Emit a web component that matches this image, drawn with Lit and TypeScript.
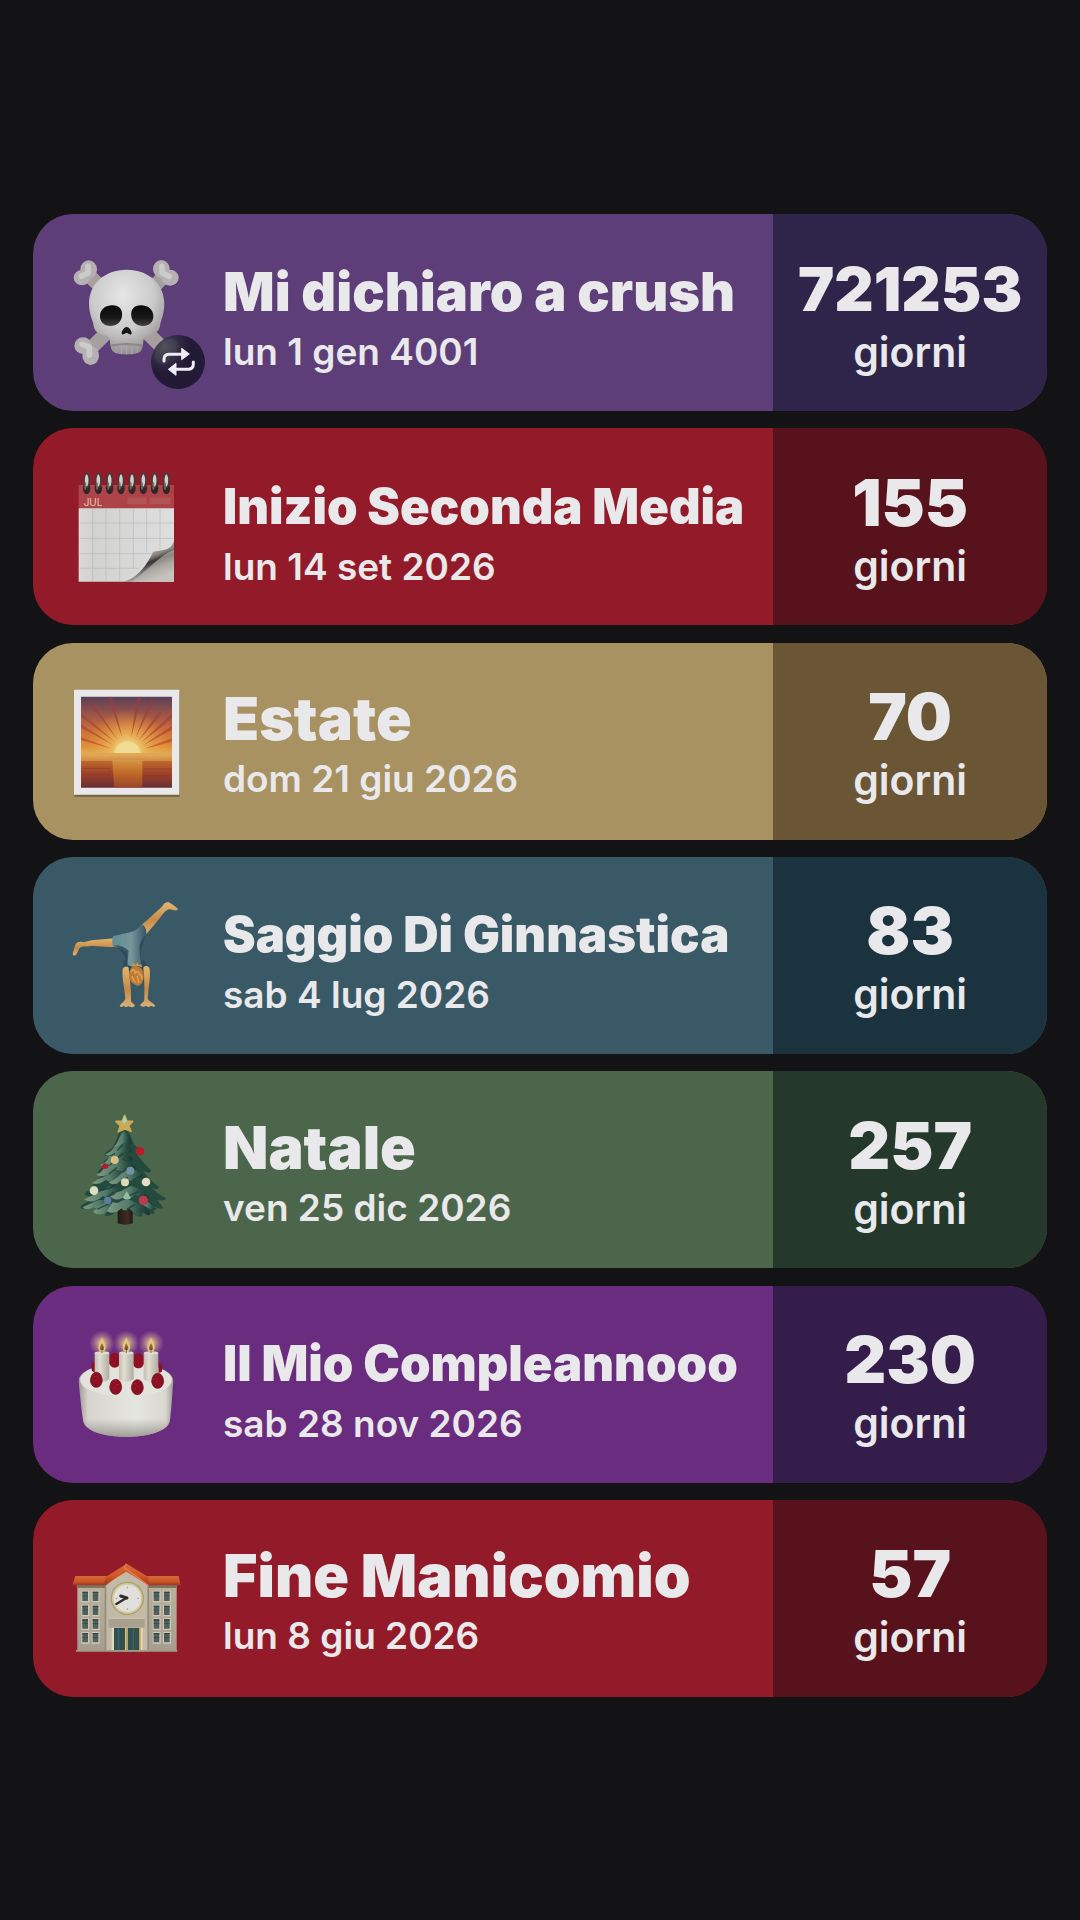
import { LitElement, css, html, svg } from 'lit';
import type { SVGTemplateResult } from 'lit';
import { customElement, property } from 'lit/decorators.js';
import { classMap } from 'lit/directives/class-map.js';

type Theme = 'violet' | 'red' | 'sand' | 'teal' | 'green' | 'purple';
type IconName = 'skull' | 'calendar' | 'sunrise' | 'cartwheel' | 'tree' | 'cake' | 'school';

interface Countdown {
  title: string;
  date: string;
  days: number;
  icon: IconName;
  theme: Theme;
  size?: 'medium' | 'small';
  repeats?: boolean;
}

const countdowns: Countdown[] = [
  { title: 'Mi dichiaro a crush', date: 'lun 1 gen 4001', days: 721253, icon: 'skull', theme: 'violet', size: 'medium', repeats: true },
  { title: 'Inizio Seconda Media', date: 'lun 14 set 2026', days: 155, icon: 'calendar', theme: 'red', size: 'small' },
  { title: 'Estate', date: 'dom 21 giu 2026', days: 70, icon: 'sunrise', theme: 'sand' },
  { title: 'Saggio Di Ginnastica', date: 'sab 4 lug 2026', days: 83, icon: 'cartwheel', theme: 'teal', size: 'small' },
  { title: 'Natale', date: 'ven 25 dic 2026', days: 257, icon: 'tree', theme: 'green' },
  { title: 'Il Mio Compleannooo', date: 'sab 28 nov 2026', days: 230, icon: 'cake', theme: 'purple', size: 'small' },
  { title: 'Fine Manicomio', date: 'lun 8 giu 2026', days: 57, icon: 'school', theme: 'red' },
];

const skull = svg`
  <defs>
    <radialGradient id="bone" cx=".45" cy=".3" r=".75">
      <stop offset="0" stop-color="#e6e6e6" />
      <stop offset=".55" stop-color="#cccbcc" />
      <stop offset="1" stop-color="#8b8688" />
    </radialGradient>
    <linearGradient id="socket" x2="0" y2="1">
      <stop offset="0" stop-color="#080808" />
      <stop offset=".6" stop-color="#181818" />
      <stop offset="1" stop-color="#444342" />
    </linearGradient>
  </defs>
  <g transform="translate(0 -8)">
    <g stroke="#a69fa0" stroke-width="42" stroke-linecap="round">
      <path d="M94 112 306 321M308 112 96 321" />
    </g>
    <g fill="#b5b0b1">
      <ellipse cx="86" cy="87" rx="25" ry="27" />
      <ellipse cx="66" cy="112" rx="25" ry="23" />
      <ellipse cx="304" cy="86" rx="25" ry="27" />
      <ellipse cx="330" cy="112" rx="26" ry="24" />
      <ellipse cx="69" cy="316" rx="26" ry="25" />
      <ellipse cx="92" cy="346" rx="25" ry="28" />
      <ellipse cx="307" cy="347" rx="23" ry="26" />
      <ellipse cx="332" cy="318" rx="24" ry="23" />
    </g>
    <path d="M84 78v20l-20 10M306 78v20l22 10M66 312l22 8v24" fill="none" stroke="#cdcaca" stroke-width="17" stroke-linecap="round" stroke-linejoin="round" />
    <path fill="url(#bone)" d="M200 88C133 88 87 132 87 190c0 28 9 45 13 60 2 22 11 30 38 36 14 4 11 16 14 32 3 20 16 24 48 24s45-4 48-24c3-16 0-28 14-32 27-6 37-14 39-36 4-15 12-32 12-60 0-58-46-102-113-102Z" />
    <path d="M154 316q46-9 93 0" fill="none" stroke="#8d8988" stroke-width="7" />
    <path d="M168 318v20M184 317v25M200 317v26M216 317v25M232 318v20" stroke="#aaa6a6" stroke-width="3" />
    <path d="M154 195c22-2 35 12 32 32-2 18-16 30-35 30-18 0-31-11-31-29 0-19 13-31 34-33Z" fill="url(#socket)" />
    <path d="M246 195c-22-2-35 12-32 32 2 18 16 30 35 30 18 0 31-11 31-29 0-19-13-31-34-33Z" fill="url(#socket)" />
    <path d="M200 260c-8 0-18 15-14 21 4 5 10-4 14-3 4-1 10 8 14 3 4-6-6-21-14-21Z" fill="#171515" />
  </g>`;

const calendar = svg`
  <defs>
    <linearGradient id="page">
      <stop offset="0" stop-color="#dcdad7" />
      <stop offset=".15" stop-color="#d2d2d0" />
      <stop offset="1" stop-color="#dededf" />
    </linearGradient>
    <linearGradient id="curl" x1=".25" y1=".1" x2=".65" y2=".95">
      <stop offset=".1" stop-color="#d9d9d9" />
      <stop offset=".42" stop-color="#85827f" />
      <stop offset=".55" stop-color="#373433" />
      <stop offset=".75" stop-color="#8e8a87" />
      <stop offset="1" stop-color="#cbc7c3" />
    </linearGradient>
  </defs>
  <g transform="translate(0 10)">
    <path d="M56 74h286v72H56z" fill="#ad4449" />
    <path d="M202 122h58M270 122h62" stroke="#b76261" stroke-width="20" opacity=".55" />
    <text class="month" x="71" y="138">JUL</text>
    <path d="M56 144h286v220H56z" fill="url(#page)" />
    <path d="M56 188h286M56 234h286M56 280h286M56 324h180M98 146v216M138 146v216M179 146v216M220 146v176M260 146v130M300 146v120" stroke="#bdbdbd" stroke-width="3" opacity=".75" />
    <path d="M342 240c-10 30-22 28-62 34-14 28-44 82-92 90h154z" fill="url(#curl)" />
    <path d="M342 268c-48 20-80 65-128 96h128z" fill="#c3bfbb" opacity=".6" />
    ${[80, 115, 149, 183, 216, 250, 284, 319].map(x => svg`
      <ellipse cx=${x} cy="84" rx="11" ry="18" fill="#302626" />
      <ellipse cx=${x} cy="60" rx="8" ry="21" fill="#d0cecb" stroke="#473b38" stroke-width="5" />
      <path d="M${x - 4} 68v18" stroke="#746c68" stroke-width="5" stroke-linecap="round" />
    `)}
  </g>`;

const sunrise = svg`
  <defs>
    <linearGradient id="sky" x2="0" y2="1">
      <stop offset="0" stop-color="#584158" />
      <stop offset=".15" stop-color="#8c4e4d" />
      <stop offset=".35" stop-color="#c96a3a" />
      <stop offset=".55" stop-color="#dd9138" />
      <stop offset=".64" stop-color="#e2b25c" />
      <stop offset=".7" stop-color="#c06b2d" />
      <stop offset=".85" stop-color="#9c4029" />
      <stop offset="1" stop-color="#682e34" />
    </linearGradient>
    <radialGradient id="glow" gradientUnits="userSpaceOnUse" cx="203" cy="240" r="125">
      <stop offset="0" stop-color="#fff3b8" />
      <stop offset=".35" stop-color="#edbf63" stop-opacity=".85" />
      <stop offset="1" stop-color="#e99b37" stop-opacity="0" />
    </radialGradient>
    <linearGradient id="ray" gradientUnits="userSpaceOnUse" x1="0" y1="85" x2="0" y2="240">
      <stop offset="0" stop-color="#813d47" />
      <stop offset="1" stop-color="#d8622a" />
    </linearGradient>
    <linearGradient id="shine" x2="0" y2="1">
      <stop offset="0" stop-color="#dc9e4c" />
      <stop offset=".4" stop-color="#cc7926" />
      <stop offset="1" stop-color="#a54c29" />
    </linearGradient>
    <clipPath id="photo"><path d="M63 77h273v273H63z" /></clipPath>
  </defs>
  <path d="M43 62h316v316H43z" fill="#413620" opacity=".45" />
  <path d="M42 56h316v315H42z" fill="#e9e9eb" />
  <path d="M63 77h273v273H63z" fill="url(#sky)" />
  <g clip-path="url(#photo)">
    <path d="M63 77h273v170H63z" fill="url(#glow)" />
    <path fill="url(#ray)" d="M187 200 143 77h13zM213 200 232 77h13zM225 205l46-120 10 6zM235 210l64-92 8 8zM243 215l93-88v16zM247 224l89-60v12zM252 234l84-33v11zM174 208 88 98l8-6zM166 214 63 137v-12zM160 222l-97-52v-10zM155 233 63 207v-9z" />
    <path d="M63 246h273v24H63z" fill="#dea252" opacity=".6" />
    <path d="M157 268h90v82h-84z" fill="url(#shine)" opacity=".8" />
    <path d="M163 246c4-46 73-46 79 0z" fill="#f1dc96" />
    <path d="M63 292h90M68 310h82M250 294h86M250 315h80" stroke="#853424" stroke-width="4" opacity=".4" />
  </g>`;

const cartwheel = svg`
  <defs>
    <linearGradient id="skin" x2="0" y2="1">
      <stop offset="0" stop-color="#e0b772" />
      <stop offset=".55" stop-color="#c98a45" />
      <stop offset="1" stop-color="#d9b077" />
    </linearGradient>
    <linearGradient id="leotard">
      <stop offset="0" stop-color="#618d91" />
      <stop offset=".55" stop-color="#75979a" />
      <stop offset="1" stop-color="#365466" />
    </linearGradient>
  </defs>
  <path fill="url(#skin)" d="M162 160 95 166l-24 6c-14-4-23 1-26 10l-7 24c1 8 9 7 12 1l8-17c6-8 18-5 30-6 20-3 50 4 74 1z" />
  <path fill="url(#skin)" d="M243 122c18-16 47-42 64-58 4-10 14-15 22-11 9 6 22 13 25 20-4 8-18 0-27 0-14 2-28 30-45 48l-23 26z" />
  <path fill="#2f4a5c" d="M194 226c-6 8-7 17 2 27l22 6c15 0 30-3 42-9 1-10-2-17-10-24l-14-8-30-3z" />
  <path fill="url(#leotard)" d="M160 153c24-7 45-8 63-16 11-6 19-16 26-18 9 8 12 19 9 31-7 15-17 25-16 39 3 17 4 31 0 48-14 9-28 10-39 2-5-16 0-30-4-40-9-8-25-9-40-16-3-12-3-20 1-30z" />
  <path fill="#29455a" d="M164 181c18 0 32 6 42 17-3 14 0 26-5 41-5-19-5-33-37-58ZM254 151c-8 15-17 25-16 40l3 36c7-20 1-35 5-46 5-12 9-16 8-30Z" opacity=".75" />
  <path fill="url(#skin)" d="M188 252c-3 24 5 52 8 88 0 8-12 14-17 23 4 5 9 2 13 0l4 4 10-3c6 4 15 3 19-2-3-8-13-9-12-17 1-37-5-73-7-96-5-7-14-5-18 3Z" />
  <path fill="url(#skin)" d="M269 252c3 24-3 52-6 88 0 9 18 13 23 23-4 5-10 0-14 0l-5 4-9-4c-7 4-16 2-18-2 3-8 12-9 13-17 1-37 0-73-3-96 3-7 16-7 19 4Z" />
  <path d="M228 243c20 1 26 23 22 40-4 18-17 24-24 16-15-6-22-19-18-37 3-12 9-20 20-19Z" fill="#be7a35" />
  <path d="M214 260q9-14 12 4q10-10 12 5q8-2 7 12M216 275l8 15M232 275l4 17" fill="none" stroke="#df9e51" stroke-width="5" stroke-linecap="round" />
  <path d="m214 244 5-11 7 8 6-9 4 8 8-3 2 10q-16-8-32-3Z" fill="#cf9650" />`;

const tree = svg`
  <defs>
    <linearGradient id="needles">
      <stop offset="0" stop-color="#7d9b85" />
      <stop offset=".5" stop-color="#547a69" />
      <stop offset=".75" stop-color="#2c5145" />
      <stop offset="1" stop-color="#17342f" />
    </linearGradient>
    <linearGradient id="trunk">
      <stop offset="0" stop-color="#1f1c18" />
      <stop offset=".65" stop-color="#442923" />
      <stop offset="1" stop-color="#1a1a16" />
    </linearGradient>
  </defs>
  <path d="M173 320h45v50q-24 8-45 0z" fill="url(#trunk)" />
  <path fill="#244a3f" d="M195 90c15 0 16 22 29 44l23 25c-4 7-14 3-19 0l24 31 22 22c-6 12-20 1-25 0l18 24 30 25c-1 8-12 8-20 3l14 15 27 16c-5 9-18 7-27 4l19 24c-12 7-25-2-30-5l3 22c-12 7-26-8-34-14l-3 23c-16 4-31-15-41-26l-29 4c-9 12-27 24-41 20l8-22c-14 7-28 16-42 10l9-17-45 9c-9-8 4-15 16-20l28-14-34-7c-5-14 27-18 38-25l-16-7c-3-10 24-20 36-31l-19-4c0-11 17-17 25-26l-10-5c5-10 17-14 23-23l-17 3c-4-14 14-14 23-26 13-16 15-54 37-54z" />
  <g fill="url(#needles)">
    <path d="M194 94c9 11 23 22 19 38-7 7-14 5-20 3-10 14-20 8-31 5 16-13 17-44 32-46Z" />
    <path d="M163 139c12 1 20-3 30-12 11 2 18 15 24 27-8 9-23 5-27 0-5 14-21 13-26 4-9 7-23 12-28 5 15-6 21-12 27-24Z" />
    <path d="M148 169c13-1 23-12 36-15 14 7 30 10 35 27-11 7-22-3-31-8-2 18-20 15-28 8-11 17-27 24-39 15 14-7 21-14 27-27Z" />
    <path d="M132 202c22-2 31-20 50-23 18 3 43 12 47 31-14 9-23-4-34-7-5 18-22 14-31 6-15 16-42 25-54 15 11-4 18-11 22-22Z" />
    <path d="M111 238c22-4 37-20 53-27 19-6 30 12 42 18-5 13-22 10-31 1-11 20-32 16-37 9-14 12-31 17-44 10 6-3 12-6 17-11Z" />
    <path d="M184 220c17-9 23-14 37-13 19 9 33 25 44 40-16 8-31-4-43-14-3 14-20 9-25 1-17 19-40 24-51 13 15-5 29-16 38-27Z" />
    <path d="M96 287c22-12 36-15 52-29 24 2 39 10 50 23-9 14-25 6-34 0-10 15-25 13-36 7-17 18-41 21-55 10Z" />
    <path d="M170 277c20-3 32-17 45-19 24 8 44 20 53 37-15 9-36-8-43-12-8 15-21 12-27 3-18 18-37 14-46 4 9-3 14-7 18-13Z" />
    <path d="M68 322c18-8 31-15 47-21 24-3 39 1 53 10-9 14-22 11-28 5-17 15-31 13-38 6-11 5-25 9-34 0Z" />
    <path d="M99 335c15-14 31-27 48-31 12 6 21 13 31 10-10 20-23 20-31 17-14 14-34 17-48 4Z" />
    <path d="M159 305c17 12 28-10 44-7 18 5 32 18 46 17 10 7 22 22 21 31-15 1-26-14-34-23l9 25c-14 4-27-14-37-24-9 11-20 8-24 1-14 15-31 18-43 7Z" />
    <path d="M237 299c20-3 39 18 53 29-17 5-31-9-40-12Z" />
  </g>
  <path d="M124 270q25-2 41-15M137 294l23-16M176 249l26-16M198 292l34-16M113 327l32-15M202 327l22-13M148 221l22-17M168 178l20-17M174 150l13-15M225 237l22-11" stroke="#15352f" stroke-width="5" stroke-linecap="round" opacity=".65" fill="none" />
  <path d="m194 46 7 18h17l-12 13 7 17-18-7-20 8 6-18-13-13h19z" fill="#cba957" stroke="#cba957" stroke-width="5" stroke-linejoin="round" />
  <path d="m194 46 7 18-8 8-7-8z" fill="#a7d4ad" />
  <circle cx="164" cy="180" r="12" fill="#d6bf83" />
  <circle cx="240" cy="153" r="13" fill="#b81c2b" />
  <circle cx="211" cy="212" r="12" fill="#7091a8" />
  <circle cx="195" cy="247" r="12" fill="#dfd9ba" />
  <circle cx="258" cy="246" r="13" fill="#e4dfc4" />
  <circle cx="102" cy="272" r="13" fill="#dddcc4" />
  <circle cx="250" cy="301" r="14" fill="#bc384d" />
  <circle cx="143" cy="301" r="11" fill="#5c7ca0" />
  <path d="m132 190 14 3-2 11-12 4-10-6z" fill="#a52131" />
  <path d="m200 274 13 20q-12 10-25-1z" fill="#8ebda0" />`;

const cake = svg`
  <defs>
    <linearGradient id="icing">
      <stop offset="0" stop-color="#9d9992" />
      <stop offset=".1" stop-color="#d6d5ce" />
      <stop offset=".6" stop-color="#e6e6e0" />
      <stop offset=".92" stop-color="#d8d6cf" />
      <stop offset="1" stop-color="#9e9893" />
    </linearGradient>
    <linearGradient id="shade" x2="0" y2="1">
      <stop offset=".75" stop-color="#8d8982" stop-opacity="0" />
      <stop offset="1" stop-color="#817c77" stop-opacity=".7" />
    </linearGradient>
    <linearGradient id="wax">
      <stop offset="0" stop-color="#c3bdad" />
      <stop offset=".35" stop-color="#e1ddd4" />
      <stop offset="1" stop-color="#b2aba0" />
    </linearGradient>
    <radialGradient id="flame">
      <stop offset=".25" stop-color="#e6cd8b" stop-opacity=".75" />
      <stop offset="1" stop-color="#c69aab" stop-opacity="0" />
    </radialGradient>
    <path id="berry" d="M0-21c12 0 17 12 18 25-2 13-9 20-18 20S-16 17-18 4C-17-9-11-21 0-21Z" />
  </defs>
  <g transform="translate(0 5)">
    <path d="M56 195c5-70 279-69 284 0-3 32-4 69-10 119-8 66-252 67-261 0-7-50-10-87-13-119Z" fill="url(#icing)" />
    <path d="M56 195c5-70 279-69 284 0-3 32-4 69-10 119-8 66-252 67-261 0-7-50-10-87-13-119Z" fill="url(#shade)" />
    <ellipse cx="198" cy="193" rx="138" ry="50" fill="#e3e2dc" />
    <g fill="#8d1023">
      <use href="#berry" x="164" y="132" /><use href="#berry" x="235" y="134" />
      <path d="M104 135q-14 9-8 31l11 6zM296 137q16 13 9 32l-10 3z" />
    </g>
    ${[126, 199, 273].map(x => svg`
      <circle cx=${x} cy="83" r="39" fill="url(#flame)" />
      <path d="M${x - 22} 112q22-9 44 0v79q-22 15-44 0z" fill="url(#wax)" />
      <ellipse cx=${x} cy="112" rx="22" ry="5" fill="#dedacc" />
      <path d="M${x} 65c-6 13-14 27-10 37 3 9 17 9 20 0 4-10-4-24-10-37z" fill="#e2c681" />
      <path d="M${x} 83q-8 13-5 20h10q3-7-5-20z" fill="#8f6530" />
      <path d="M${x} 95v17" stroke="#4a3722" stroke-width="2" />
    `)}
    <g fill="#8d1023" stroke="#611020" stroke-width="2">
      <use href="#berry" x="109" y="191" /><use href="#berry" x="167" y="212" />
      <use href="#berry" x="232" y="213" /><use href="#berry" x="293" y="194" />
    </g>
    <path d="m103 181 2 2m5 0 2 2m-8 8 2 2m55 5 2 2m7 3 2 2m-8 8 2 2m58-15 2 2m6 6 2 2m-9 5 2 2m54-30 2 2m6 5 2 2" stroke="#bb4551" stroke-width="3" />
  </g>`;

const school = svg`
  <defs>
    <linearGradient id="wall" x2="0" y2="1">
      <stop offset="0" stop-color="#bbb29b" />
      <stop offset="1" stop-color="#a59e8f" />
    </linearGradient>
    <linearGradient id="roof" x2="0" y2="1">
      <stop offset="0" stop-color="#d06b3c" />
      <stop offset=".55" stop-color="#d25826" />
      <stop offset="1" stop-color="#9c3424" />
    </linearGradient>
  </defs>
  <g transform="translate(0 50)">
    <path d="M52 118h298v200H52z" fill="url(#wall)" />
    <path d="M50 121h300v9H50z" fill="#807362" />
    <path d="M46 94h310l6 28H37z" fill="url(#roof)" />
    ${[67, 98, 281, 312].map(x => [141, 183, 224, 265].map(y => svg`
      <path d="M${x - 3} ${y - 3}h24v35h-24z" fill="#d0c8b4" />
      <path d="M${x} ${y}h17v28h-17z" fill="#4e6161" />
      <path d="M${x} ${y}h17v4h-17zM${x} ${y + 12}h17v2h-17z" fill="#394446" />
    `))}
    <path d="M138 122l63-47 63 47v198H138z" fill="#c2baa7" />
    <path d="M262 123h5v195h-5zM134 123h5v195h-5z" fill="#958b7b" />
    <path d="m200 57 64 39 5 27-70-42-70 42 9-27z" fill="url(#roof)" />
    <path d="m198 57-5 12 7 5 65 48" fill="none" stroke="#ec7548" stroke-width="4" />
    <circle cx="202" cy="161" r="50" fill="#a8a06d" />
    <circle cx="202" cy="161" r="46" fill="#d2ca9c" />
    <circle cx="202" cy="161" r="41" fill="#e1e0dc" />
    <path d="m199 160-30 18" stroke="#302c29" stroke-width="7" stroke-linecap="round" />
    <path d="m201 160-19-6" stroke="#302c29" stroke-width="9" stroke-linecap="round" />
    <path d="M202 126v5M202 191v5M167 161h5M232 161h5" stroke="#9a9892" stroke-width="3" />
    <path d="M155 248h93v72h-93z" fill="#ddd8c2" />
    <path d="M162 250h33v70h-33zM203 250h34v70h-34z" fill="#315052" />
    <path d="M176 252v67M220 252v67" stroke="#456766" stroke-width="3" />
    <path d="M197 250h5v70h-5zM237 250h5v70h-5z" fill="#c69b45" />
    <path d="M146 218h108v31H146z" fill="#a9a18d" />
    <path d="M146 218h108v5H146z" fill="#ccc4b0" />
    <path d="M48 316h304v5H48z" fill="#a39988" />
  </g>`;

const icons: Record<IconName, SVGTemplateResult> = {
  skull, calendar, sunrise, cartwheel, tree, cake, school,
};

@customElement('countdown-card')
export class CountdownCard extends LitElement {
  static styles = css`
    :host {
      display: block;
      color: #e9e8ea;
    }

    .card {
      display: flex;
      min-height: 197px;
      border-radius: 40px;
      overflow: hidden;
    }

    .violet { background: #5d3e79; --count-background: #2f2449; }
    .red { background: #931b29; --count-background: #57121c; }
    .sand { background: #a89262; --count-background: #6a5634; }
    .teal { background: #3a5967; --count-background: #1a333f; }
    .green { background: #4b664b; --count-background: #24382c; }
    .purple { background: #6a2c7e; --count-background: #341c4b; }

    .event {
      flex: 1;
      min-width: 0;
      display: flex;
      align-items: center;
      gap: 23px;
      padding-left: 27px;
    }

    .icon {
      position: relative;
      flex: none;
      width: 140px;
      height: 140px;
    }

    .picture {
      display: block;
      width: 100%;
      height: 100%;
      overflow: visible;
    }

    .month {
      font: 30px 'Inter', sans-serif;
      fill: #e8c9ae;
    }

    .badge {
      position: absolute;
      right: -5px;
      bottom: -6px;
      width: 54px;
      height: 54px;
      border-radius: 50%;
      background: radial-gradient(circle at 25% 22%, #44434fdd, #201833f4 45%);
    }

    .details {
      min-width: 0;
      padding-top: 6px;
    }

    .title, .date, .days, .unit {
      margin: 0;
      white-space: nowrap;
    }

    .title {
      font-size: 59px;
      line-height: 70px;
      font-weight: 900;
    }

    .medium {
      font-size: 54px;
    }

    .small {
      font-size: 49px;
    }

    .date {
      font-size: 37px;
      line-height: 50px;
      font-weight: 600;
    }

    .count {
      flex: 0 0 27%;
      display: flex;
      flex-direction: column;
      align-items: center;
      justify-content: center;
      padding-top: 6px;
      background: var(--count-background);
      box-sizing: border-box;
    }

    .days {
      font-size: 65px;
      line-height: 72px;
      font-weight: 900;
    }

    .wide {
      font-size: 61px;
    }

    .unit {
      font-size: 41px;
      line-height: 54px;
      font-weight: 600;
    }
  `;

  @property({ attribute: false })
  item!: Countdown;

  renderBadge() {
    return html`
      <svg class="badge" viewBox="272 286 162 162" role="img" aria-label="Si ripete">
        <g fill="none" stroke="#eeedf5" stroke-width="9" stroke-linecap="round">
          <path d="M311 364v-5q0-15 15-15h42" />
          <path d="M399 367v6q0 16-16 16h-41" />
        </g>
        <path d="m364 326 23 17-23 17zM347 371l-23 18 23 18z" fill="#eeedf5" stroke="#eeedf5" stroke-width="3" stroke-linejoin="round" />
      </svg>`;
  }

  render() {
    const { title, date, days, icon, theme, size, repeats } = this.item;
    return html`
      <article class=${classMap({ card: true, [theme]: true })}>
        <div class="event">
          <div class="icon">
            <svg class="picture" viewBox="0 0 420 420" aria-hidden="true">${icons[icon]}</svg>
            ${repeats ? this.renderBadge() : ''}
          </div>
          <div class="details">
            <h2 class="title"><span class=${classMap({ medium: size === 'medium', small: size === 'small' })}>${title}</span></h2>
            <p class="date">${date}</p>
          </div>
        </div>
        <div class="count">
          <p class="days"><span class=${classMap({ wide: days > 99999 })}>${days}</span></p>
          <p class="unit">giorni</p>
        </div>
      </article>`;
  }
}

@customElement('app-root')
export class AppRoot extends LitElement {
  static styles = css`
    :host {
      display: block;
      background: #131215;
      font-family: 'Inter', 'Liberation Sans', sans-serif;
    }

    .list {
      box-sizing: border-box;
      display: grid;
      gap: 16px;
      align-content: space-between;
      min-height: 100vh;
      margin: 0;
      padding: 214px 33px 223px;
      list-style: none;
    }
  `;

  render() {
    return html`
      <main>
        <ul class="list">
          ${countdowns.map(item => html`<li><countdown-card .item=${item}></countdown-card></li>`)}
        </ul>
      </main>`;
  }
}
